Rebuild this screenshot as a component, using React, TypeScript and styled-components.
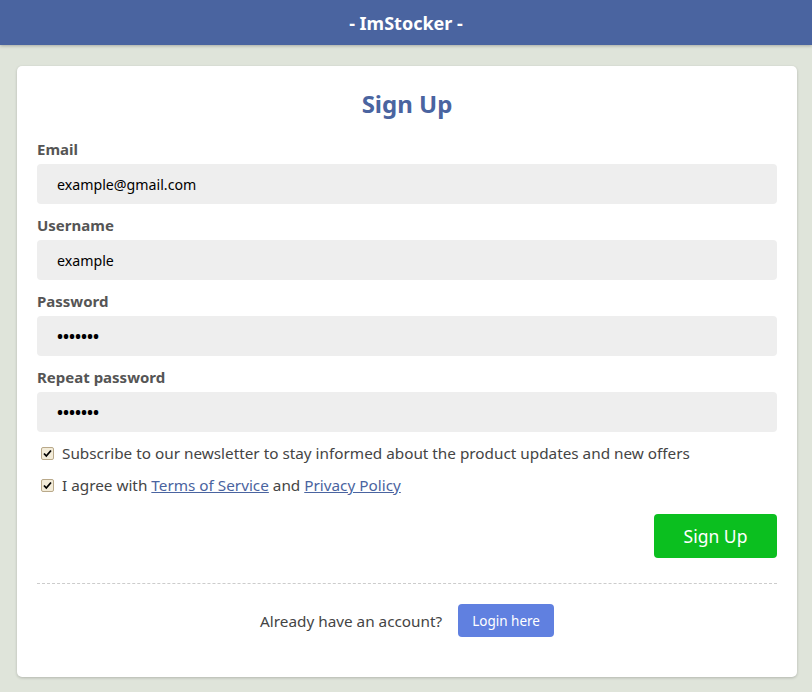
import React from "react";
import styled, { createGlobalStyle } from "styled-components";

const Global = createGlobalStyle`
  html, body { margin: 0; padding: 0; }
  body {
    background: #dfe4da;
    font-family: "Noto Sans", "Open Sans", sans-serif;
    color: #444;
  }
`;

const Page = styled.div`
  min-height: 692px;
  display: flex;
  flex-direction: column;
`;

const Header = styled.header`
  height: 45px;
  background: #4a64a0;
  box-shadow: 0 1px 3px rgba(0, 0, 0, 0.25);
  display: flex;
  align-items: center;
  justify-content: center;
  color: #fff;
  font-weight: 700;
  font-size: 18px;
`;

const Main = styled.main`
  padding: 21px 15px 15px 17px;
`;

const Card = styled.div`
  background: #fff;
  border-radius: 5px;
  box-shadow: 0 1px 3px rgba(0, 0, 0, 0.2);
  padding: 20px 20px 40px;
  width: 780px;
  box-sizing: border-box;
`;

const Title = styled.h1`
  margin: 0 0 17px;
  text-align: center;
  color: #4a64a0;
  font-size: 24px;
  font-weight: 700;
  line-height: 36px;
`;

const Field = styled.div`
  display: flex;
  flex-direction: column;
  margin-bottom: 11px;
`;

const Label = styled.label`
  font-size: 15px;
  font-weight: 700;
  color: #555;
  line-height: 20px;
  margin-bottom: 5px;
`;

const Input = styled.div<{ $pwd?: boolean }>`
  height: 40px;
  background: #eeeeee;
  border-radius: 4px;
  display: flex;
  align-items: center;
  padding-left: 20px;
  font-size: ${(p) => (p.$pwd ? "16px" : "14.2px")};
  color: #000;
  font-weight: ${(p) => (p.$pwd ? 700 : 400)};
`;

const CheckList = styled.div`
  display: flex;
  flex-direction: column;
  gap: 12px;
`;

const CheckRow = styled.div`
  display: flex;
  align-items: center;
  gap: 8px;
  font-size: 15.3px;
  color: #444;
  line-height: 20px;
  padding-left: 4px;
`;

const Box = styled.span`
  width: 11px;
  height: 11px;
  border: 1px solid #b9a98a;
  background: #f3ecd9;
  border-radius: 2px;
  display: inline-flex;
  align-items: center;
  justify-content: center;
`;

const Link = styled.a`
  color: #4a64a0;
  text-decoration: underline;
`;

const Actions = styled.div`
  display: flex;
  justify-content: flex-end;
  margin-top: 19px;
`;

const SignButton = styled.button`
  width: 123px;
  height: 44px;
  border: none;
  border-radius: 4px;
  background: #0bbf1f;
  color: #fff;
  font-family: inherit;
  font-size: 17.5px;
`;

const Divider = styled.hr`
  border: none;
  border-top: 1px dashed #cccccc;
  margin: 25px 0 20px;
`;

const Footer = styled.div`
  display: flex;
  align-items: center;
  justify-content: center;
  gap: 16px;
  font-size: 15.3px;
  color: #444;
`;

const LoginButton = styled.button`
  height: 33px;
  padding: 0 14px;
  border: none;
  border-radius: 4px;
  background: #6080e0;
  color: #fff;
  font-family: inherit;
  font-size: 13.5px;
`;

const Check = () => (
  <Box>
    <svg width="9" height="9" viewBox="0 0 9 9">
      <path d="M1 4.5 L3.3 7 L8 1.5" stroke="#000" strokeWidth="1.8" fill="none" />
    </svg>
  </Box>
);

export default function App() {
  return (
    <Page>
      <Global />
      <Header>- ImStocker -</Header>
      <Main>
        <Card>
          <Title>Sign Up</Title>
          <Field>
            <Label>Email</Label>
            <Input>example@gmail.com</Input>
          </Field>
          <Field>
            <Label>Username</Label>
            <Input>example</Input>
          </Field>
          <Field>
            <Label>Password</Label>
            <Input $pwd>•••••••</Input>
          </Field>
          <Field>
            <Label>Repeat password</Label>
            <Input $pwd>•••••••</Input>
          </Field>
          <CheckList>
            <CheckRow>
              <Check />
              Subscribe to our newsletter to stay informed about the product updates and new offers
            </CheckRow>
            <CheckRow>
              <Check />
              <span>
                I agree with <Link href="#">Terms of Service</Link> and <Link href="#">Privacy Policy</Link>
              </span>
            </CheckRow>
          </CheckList>
          <Actions>
            <SignButton>Sign Up</SignButton>
          </Actions>
          <Divider />
          <Footer>
            Already have an account?
            <LoginButton>Login here</LoginButton>
          </Footer>
        </Card>
      </Main>
    </Page>
  );
}
